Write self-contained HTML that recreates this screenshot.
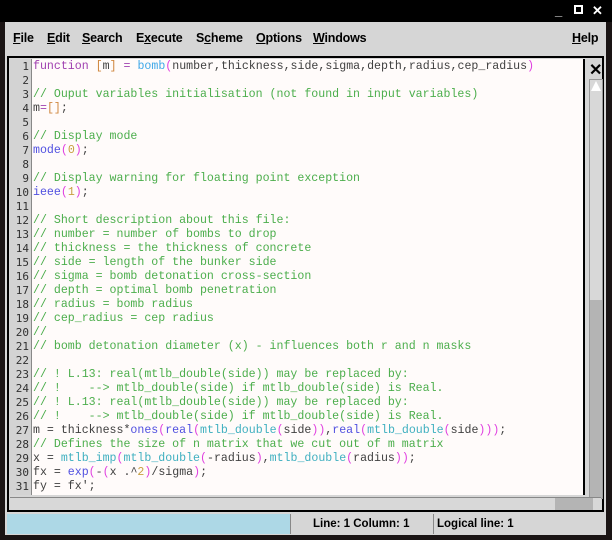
<!DOCTYPE html>
<html><head><meta charset="utf-8"><style>
*{margin:0;padding:0;box-sizing:border-box}
body{width:612px;height:540px;background:#1a1414;position:relative;overflow:hidden;font-family:"Liberation Sans",sans-serif}
.title{position:absolute;left:0;top:0;width:612px;height:22px;background:#000}
.tb{position:absolute;top:3px;color:#fff;font-weight:bold;font-size:13px}
.win{position:absolute;left:5px;top:22px;width:601px;height:513px;background:#d6d6d6}
.menu{position:absolute;top:9px;font-weight:bold;font-size:12.5px;color:#000;letter-spacing:-0.2px}
.frame{position:absolute;left:2px;top:34px;width:597px;height:456px;border:2px solid #000;background:#d6d6d6}
.gut{position:absolute;left:1px;top:1px;width:22px;height:436px;background:#d3d3d3;border-right:1px solid #888}
.txt{position:absolute;left:23px;top:1px;width:553px;height:436px;background:#fffbfa;border-right:2px solid #000}
.code{position:absolute;left:24px;top:2px;font-family:"Liberation Mono","DejaVu Sans Mono",monospace;font-size:11.6px;line-height:14px;white-space:pre;color:#404040;width:552px;height:436px;overflow:hidden}
.nums{position:absolute;left:0;top:1px;width:19px;text-align:right;font-family:"DejaVu Sans Mono",monospace;font-size:11px;line-height:14px;white-space:pre;color:#303030}
.c{color:#4cae4c}.k{color:#a040b0}.o{color:#d08840}.b{color:#40a8e8}.p{color:#e040e0}.f{color:#5050e0}.t{color:#40b0c0}.n{color:#c8a040}
.close{position:absolute;left:580px;top:2px;font-size:16px;font-weight:bold}
.vs{position:absolute;left:580px;top:21px;width:14px;height:420px;background:#d8d8d8;border:1px solid #999}
.vs .dk{position:absolute;left:0;top:220px;width:12px;height:198px;background:#b4b4b4}
.vs .ar{position:absolute;left:1px;top:1px;width:0;height:0;border-left:5px solid transparent;border-right:5px solid transparent;border-bottom:10px solid #fff}
.hs{position:absolute;left:1px;top:439px;width:591px;height:13px;background:#d8d8d8;border-top:1px solid #888}
.hs .dk{position:absolute;left:545px;top:0;width:38px;height:12px;background:#b4b4b4}
.st{position:absolute;top:492px;height:20px;font-size:11.5px;font-weight:bold;line-height:20px}
</style></head><body>
<div class="title"></div>
<div class="tb" style="left:555px">_</div>
<div class="tb" style="left:574px;top:5px;width:9px;height:9px;border:2px solid #fff"></div>
<div class="tb" style="left:592px">✕</div>
<div class="win">
<div class="menu" style="left:8px"><u>F</u>ile</div>
<div class="menu" style="left:42px"><u>E</u>dit</div>
<div class="menu" style="left:77px"><u>S</u>earch</div>
<div class="menu" style="left:131px">E<u>x</u>ecute</div>
<div class="menu" style="left:191px">S<u>c</u>heme</div>
<div class="menu" style="left:251px"><u>O</u>ptions</div>
<div class="menu" style="left:308px"><u>W</u>indows</div>
<div class="menu" style="left:567px"><u>H</u>elp</div>
<div class="frame">
<div class="gut"><div class="nums">1
2
3
4
5
6
7
8
9
10
11
12
13
14
15
16
17
18
19
20
21
22
23
24
25
26
27
28
29
30
31</div></div>
<div class="txt"></div>
<div class="code"><span class="k">function</span> <span class="o">[</span>m<span class="o">]</span> <span class="k">=</span> <span class="b">bomb</span><span class="p">(</span>number,thickness,side,sigma,depth,radius,cep_radius<span class="p">)</span>

<span class="c">// Ouput variables initialisation (not found in input variables)</span>
m<span class="k">=</span><span class="o">[]</span>;

<span class="c">// Display mode</span>
<span class="f">mode</span><span class="p">(</span><span class="n">0</span><span class="p">)</span>;

<span class="c">// Display warning for floating point exception</span>
<span class="f">ieee</span><span class="p">(</span><span class="n">1</span><span class="p">)</span>;

<span class="c">// Short description about this file:</span>
<span class="c">// number = number of bombs to drop</span>
<span class="c">// thickness = the thickness of concrete</span>
<span class="c">// side = length of the bunker side</span>
<span class="c">// sigma = bomb detonation cross-section</span>
<span class="c">// depth = optimal bomb penetration</span>
<span class="c">// radius = bomb radius</span>
<span class="c">// cep_radius = cep radius</span>
<span class="c">//</span>
<span class="c">// bomb detonation diameter (x) - influences both r and n masks</span>

<span class="c">// ! L.13: real(mtlb_double(side)) may be replaced by:</span>
<span class="c">// !    --> mtlb_double(side) if mtlb_double(side) is Real.</span>
<span class="c">// ! L.13: real(mtlb_double(side)) may be replaced by:</span>
<span class="c">// !    --> mtlb_double(side) if mtlb_double(side) is Real.</span>
m = thickness*<span class="f">ones</span><span class="p">(</span><span class="f">real</span><span class="p">(</span><span class="t">mtlb_double</span><span class="p">(</span>side<span class="p">))</span>,<span class="f">real</span><span class="p">(</span><span class="t">mtlb_double</span><span class="p">(</span>side<span class="p">)))</span>;
<span class="c">// Defines the size of n matrix that we cut out of m matrix</span>
x = <span class="t">mtlb_imp</span><span class="p">(</span><span class="t">mtlb_double</span><span class="p">(</span>-radius<span class="p">)</span>,<span class="t">mtlb_double</span><span class="p">(</span>radius<span class="p">))</span>;
fx = <span class="f">exp</span><span class="p">(</span>-<span class="p">(</span>x .^<span class="n">2</span><span class="p">)</span>/sigma<span class="p">)</span>;
fy = fx';</div>
<div class="close">✕</div>
<div class="vs"><div class="ar"></div><div class="dk"></div></div>
<div class="hs"><div class="dk"></div></div>
</div>
<div class="st" style="left:2px;width:283px;background:#add8e6"></div>
<div class="st" style="left:285px;width:142px;padding-left:22px;border-left:1px solid #888">Line: 1 Column: 1</div>
<div class="st" style="left:428px;width:170px;padding-left:3px;border-left:1px solid #888">Logical line: 1</div>
</div>
</body></html>
